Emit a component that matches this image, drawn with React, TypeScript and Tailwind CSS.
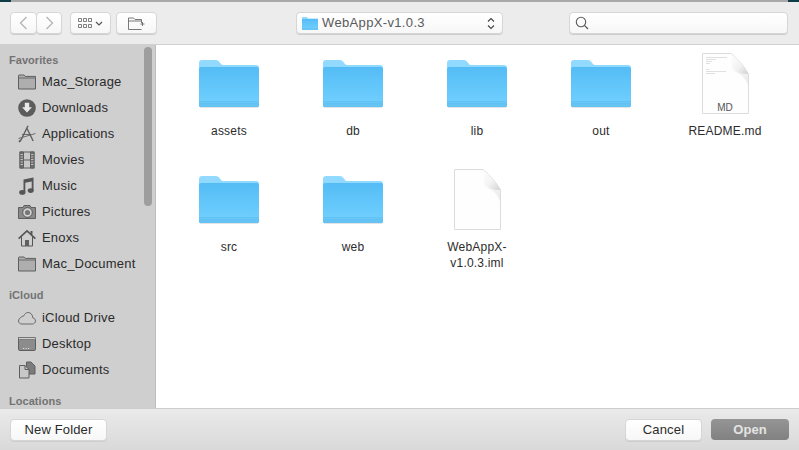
import { ReactNode } from 'react';

const font = { fontFamily: '"Liberation Sans", Arial, sans-serif' };

function Folder({ w = 60, h = 48 }: { w?: number; h?: number }) {
  return (
    <svg width={w} height={h} viewBox="0 0 60 48" className="block">
      <defs>
        <linearGradient id="fback" x1="0" y1="0" x2="0" y2="1">
          <stop offset="0" stopColor="#93daff" />
          <stop offset="1" stopColor="#7ccfff" />
        </linearGradient>
        <linearGradient id="ffront" x1="0" y1="0" x2="0" y2="1">
          <stop offset="0" stopColor="#54bcf5" />
          <stop offset="0.8" stopColor="#6ccdfd" />
          <stop offset="1" stopColor="#74d2ff" />
        </linearGradient>
      </defs>
      <path d="M1 47.6h58" stroke="#d8d8d8" strokeWidth="0.8" />
      <path d="M0 3Q0 0 3 0H17Q19 0 20 1.5L22 4Q22.7 5 24 5H57Q60 5 60 8V45Q60 47 58 47H2Q0 47 0 45Z" fill="url(#fback)" />
      <path d="M0 9Q0 7 2 7H58Q60 7 60 9V45Q60 47 58 47H2Q0 47 0 45Z" fill="url(#ffront)" />
      <path d="M0 42H60V45Q60 47 58 47H2Q0 47 0 45Z" fill="#6ac8f8" />
      <path d="M0 41.5H60M0 43.8H60M0 46H60" stroke="#58b8ec" strokeWidth="0.7" opacity="0.8" />
    </svg>
  );
}

function DocPage({ children }: { children?: ReactNode }) {
  return (
    <svg width="47" height="61" viewBox="0 0 47 61" className="block">
      <defs>
        <linearGradient id="fold" x1="0" y1="0" x2="1" y2="1">
          <stop offset="0" stopColor="#ffffff" />
          <stop offset="0.55" stopColor="#f2f2f2" />
          <stop offset="1" stopColor="#d2d2d2" />
        </linearGradient>
        <linearGradient id="foldshade" x1="0" y1="0" x2="1" y2="1">
          <stop offset="0" stopColor="#ffffff" />
          <stop offset="1" stopColor="#e6e6e6" />
        </linearGradient>
      </defs>
      <path d="M.5.5H29C36 6 42 13 46.5 21V60.5H.5Z" fill="#fefefe" stroke="#dcdcdc" strokeLinejoin="round" />
      <path d="M29 1Q28 17 33 19Q42 22 46 32V21Z" fill="url(#foldshade)" opacity="0.75" />
      <path d="M29 1C36 6 42 13 46.5 21Q35 21 31.5 16Q29.5 12 29 1Z" fill="url(#fold)" />
      {children}
    </svg>
  );
}

function FolderItem({ label }: { label: string }) {
  return (
    <div className="flex flex-col items-center">
      <div className="h-[64px] pt-[7px]"><Folder /></div>
      <span className="mt-[6px] text-[12px] leading-[16px] tracking-[0.2px] text-[#2c2c2c]">{label}</span>
    </div>
  );
}

function ReadmeIcon() {
  return (
    <div className="relative">
      <DocPage>
        <path d="M4 4.5H25M4 6.5H14M4 8.5H10M4 10.5H8M4 16.5H7M4 18.5H24M4 20.5H13" stroke="#c2c2c2" strokeWidth="0.5" />
      </DocPage>
      <span className="absolute bottom-0 left-0 right-0 text-center text-[10px] leading-[12px] text-[#555]">MD</span>
    </div>
  );
}

const ic = 'h-[18px] w-[18px] text-[#5f5f5f]';

const icons: Record<string, ReactNode> = {
  disk: (
    <svg viewBox="0 0 18 18" className={ic}>
      <path d="M.5 4V2.7Q.5 2 1.2 2H6L7.3 3.4H17.5V16H.5Z" fill="#aeaeae" stroke="#5f5f5f" />
      <path d="M.5 5H17.5" stroke="#6a6a6a" />
    </svg>
  ),
  downloads: (
    <svg viewBox="0 0 18 18" className={ic}>
      <circle cx="9" cy="9" r="8.8" fill="#5c5c5c" />
      <path d="M6.8 3.8H11.2V8.2H14L9 13.6L4 8.2H6.8Z" fill="#e8e8e8" />
    </svg>
  ),
  apps: (
    <svg viewBox="0 0 18 18" className={ic} fill="none" stroke="#5f5f5f">
      <path d="M10 .8L3 15M8.5 2.5L15.2 16" strokeWidth="1.4" />
      <path d="M.5 13.5L17.5 8.5M4 9.5H13" strokeWidth="0.9" />
      <path d="M1 16.8L3 15" strokeWidth="1.8" />
    </svg>
  ),
  movies: (
    <svg viewBox="0 0 18 18" className={ic} fill="none" stroke="#5f5f5f">
      <rect x="2" y="1" width="14" height="16" fill="#c8c8c8" />
      <path d="M2 1H5.5V17H2ZM12.5 1H16V17H12.5Z" fill="#6f6f6f" />
      <path d="M5.5 9H12.5" />
      <path d="M2.5 3.5H5M2.5 6H5M2.5 8.5H5M2.5 11H5M2.5 13.5H5M13 3.5H15.5M13 6H15.5M13 8.5H15.5M13 11H15.5M13 13.5H15.5" stroke="#d0d0d0" strokeWidth="0.8" />
    </svg>
  ),
  music: (
    <svg viewBox="0 0 18 18" className={ic} fill="#555">
      <path d="M5.5 2.5L15.5 .5V13.5H13.7V4.4L7.3 5.7V15.5H5.5Z" />
      <ellipse cx="4.3" cy="15.4" rx="3.1" ry="2.4" />
      <ellipse cx="12.7" cy="13.6" rx="3" ry="2.4" />
    </svg>
  ),
  pictures: (
    <svg viewBox="0 0 18 18" className={ic}>
      <path d="M.5 4.5H5L6 2.5H12L13 4.5H17.5V15.5H.5Z" fill="#8a8a8a" stroke="#5f5f5f" />
      <circle cx="9.5" cy="9.5" r="4.8" fill="#d4d4d4" stroke="#555" />
      <circle cx="9.5" cy="9.5" r="2.6" fill="#777" />
    </svg>
  ),
  home: (
    <svg viewBox="0 0 18 18" className={ic} fill="none" stroke="#555">
      <path d="M.6 9.6L9 1.8L17.4 9.6" strokeWidth="1.6" />
      <path d="M13.5 2V5.5" strokeWidth="2" />
      <path d="M3.5 8V17H14.5V8" />
      <rect x="7" y="11" width="4" height="6" fill="#5f5f5f" stroke="none" />
    </svg>
  ),
  cloud: (
    <svg viewBox="0 0 18 18" className={ic} fill="none" stroke="#5f5f5f" strokeWidth="0.9">
      <path d="M4 15H14.2C16 15 17.5 13.6 17.5 11.9C17.5 10.2 16.3 9 14.8 8.9C14.8 5.8 12.7 3.5 10.2 3.5C8.2 3.5 6.6 4.8 6 6.7C3.9 7.3.5 9.5.5 12C.5 13.8 2 15 4 15Z" />
    </svg>
  ),
  desktop: (
    <svg viewBox="0 0 18 18" className={ic}>
      <rect x="0.5" y="2.5" width="17" height="13" rx="1.5" fill="#8c8c8c" stroke="#5f5f5f" />
      <rect x="0.5" y="2.5" width="17" height="2" fill="#cfcfcf" stroke="#5f5f5f" strokeWidth="0.6" />
      <path d="M5 13.5H6.2M7.5 13.5H8.7M10 13.5H11.2" stroke="#e0e0e0" />
    </svg>
  ),
  documents: (
    <svg viewBox="0 0 18 18" className={ic} fill="#c8c8c8" stroke="#5f5f5f">
      <path d="M8.5 1H13L17 5V13H8.5Z" fill="#7c7c7c" />
      <path d="M1.5 4.5H7L11 8.5V17H1.5Z" />
      <path d="M7 4.5V8.5H11" fill="none" />
    </svg>
  ),
};

function SideRow({ icon, label }: { icon: string; label: string }) {
  return (
    <div className="flex h-[26px] items-center gap-[6px] pl-[18px] text-[13px] tracking-[0.2px] text-[#2b2b2b]">
      {icons[icon]}
      <span>{label}</span>
    </div>
  );
}

function SideHeader({ label, h }: { label: string; h: string }) {
  return <div className={`flex items-end pl-[9px] text-[11px] leading-[14px] font-bold tracking-[0.05px] text-[#737373] ${h}`}>{label}</div>;
}

const btn = 'flex h-[22px] items-center justify-center rounded-[4px] border border-[#d6d6d6] bg-gradient-to-b from-white to-[#f7f7f7] shadow-[0_1px_0_#cdcdcd]';

export default function App() {
  return (
    <div className="flex h-[450px] w-[799px] flex-col overflow-hidden bg-white" style={font}>
      <div className="flex h-[2px] bg-[#a9a9a9]">
        <div className="w-[11px] bg-[#0f3d46]" />
        <div className="flex-1" />
        <div className="w-[11px] bg-[#0f3d46]" />
      </div>

      <div className="flex h-[43px] items-start border-b border-[#d0d0d0] bg-[#ececec] pl-[10px] pt-[10px]">
        <div className="flex">
          <div className={`${btn} w-[27px]`}>
            <svg width="9" height="14" viewBox="0 0 9 14" fill="none" stroke="#b4b4b4" strokeWidth="1.3"><path d="M7.5 1L1.5 7L7.5 13" /></svg>
          </div>
          <div className={`${btn} ml-[-1px] w-[26px]`}>
            <svg width="9" height="14" viewBox="0 0 9 14" fill="none" stroke="#b4b4b4" strokeWidth="1.3"><path d="M1.5 1L7.5 7L1.5 13" /></svg>
          </div>
        </div>
        <div className={`${btn} ml-[8px] w-[41px] gap-[3px]`}>
          <svg width="14" height="10" viewBox="0 0 14 10" fill="none" stroke="#5f5f5f" strokeWidth="0.8">
            <path d="M.5.5h3v3h-3zM5.5.5h3v3h-3zM10.5.5h3v3h-3zM.5 6.5h3v3h-3zM5.5 6.5h3v3h-3zM10.5 6.5h3v3h-3z" />
          </svg>
          <svg width="8" height="5" viewBox="0 0 8 5" fill="none" stroke="#555" strokeWidth="1.2"><path d="M1 1L4 4L7 1" /></svg>
        </div>
        <div className={`${btn} ml-[5px] w-[41px]`}>
          <svg width="18" height="13" viewBox="0 0 18 13" fill="none" stroke="#6a6a6a" strokeWidth="0.9">
            <path d="M13.5 12.5H.5V1H5.5L7 2.5H13.5V6M.5 4H13.5M14.5 5V9M12.5 7H16.5" />
          </svg>
        </div>
        <div className={`${btn} ml-[139px] w-[207px] justify-start pl-[5px] pr-[7px]`}>
          <Folder w={16} h={13} />
          <span className="ml-[4px] flex-1 text-[13px] tracking-[0.35px] text-[#5a5a5a]">WebAppX-v1.0.3</span>
          <svg width="8" height="13" viewBox="0 0 8 13" fill="none" stroke="#444" strokeWidth="1.1"><path d="M1 4.5L4 1.5L7 4.5M1 8.5L4 11.5L7 8.5" /></svg>
        </div>
        <div className={`${btn} ml-[66px] w-[219px] justify-start pl-[5px]`}>
          <svg width="14" height="14" viewBox="0 0 14 14" fill="none" stroke="#5a5a5a" strokeWidth="1.1"><circle cx="6" cy="6" r="4.7" /><path d="M9.4 9.4L13 13" strokeWidth="1.3" /></svg>
        </div>
      </div>

      <div className="flex min-h-0 flex-1">
        <aside className="relative w-[156px] shrink-0 overflow-hidden border-r border-[#bdbdbd] bg-[#cfcfcf]">
          <SideHeader label="Favorites" h="h-[24px] pb-[2px]" />
          <SideRow icon="disk" label="Mac_Storage" />
          <SideRow icon="downloads" label="Downloads" />
          <SideRow icon="apps" label="Applications" />
          <SideRow icon="movies" label="Movies" />
          <SideRow icon="music" label="Music" />
          <SideRow icon="pictures" label="Pictures" />
          <SideRow icon="home" label="Enoxs" />
          <SideRow icon="disk" label="Mac_Document" />
          <SideHeader label="iCloud" h="h-[28px] pb-[3px]" />
          <SideRow icon="cloud" label="iCloud Drive" />
          <SideRow icon="desktop" label="Desktop" />
          <SideRow icon="documents" label="Documents" />
          <SideHeader label="Locations" h="h-[26px] pb-[1px]" />
          <div className="absolute left-[144px] top-[2px] h-[159px] w-[8px] rounded-full bg-[#9e9e9e]" />
        </aside>

        <main className="grid flex-1 grid-cols-[repeat(5,124px)] auto-rows-[116px] pl-[11px] pt-[8px]">
          <FolderItem label="assets" />
          <FolderItem label="db" />
          <FolderItem label="lib" />
          <FolderItem label="out" />
          <div className="flex flex-col items-center">
            <ReadmeIcon />
            <span className="mt-[9px] text-[12px] leading-[16px] tracking-[0.2px] text-[#2c2c2c]">README.md</span>
          </div>
          <FolderItem label="src" />
          <FolderItem label="web" />
          <div className="flex flex-col items-center">
            <DocPage />
            <span className="mt-[9px] text-center text-[12px] leading-[16px] tracking-[0.2px] text-[#2c2c2c]">WebAppX-<br />v1.0.3.iml</span>
          </div>
        </main>
      </div>

      <footer className="flex h-[42px] items-start border-t border-[#cdcdcd] bg-gradient-to-b from-[#eaeaea] to-[#d9d9d9] px-[10px] pt-[10px]">
        <div className={`${btn} h-[21px] w-[97px] text-[13px] tracking-[0.15px] text-[#2b2b2b]`}>New Folder</div>
        <div className={`${btn} ml-auto h-[21px] w-[77px] text-[13px] tracking-[0.2px] text-[#2b2b2b]`}>Cancel</div>
        <div className="ml-[9px] flex h-[21px] w-[78px] items-center justify-center rounded-[4px] bg-gradient-to-b from-[#959595] to-[#818181] text-[13px] font-bold tracking-[0.1px] text-[#e4e4e4]">Open</div>
      </footer>
    </div>
  );
}
